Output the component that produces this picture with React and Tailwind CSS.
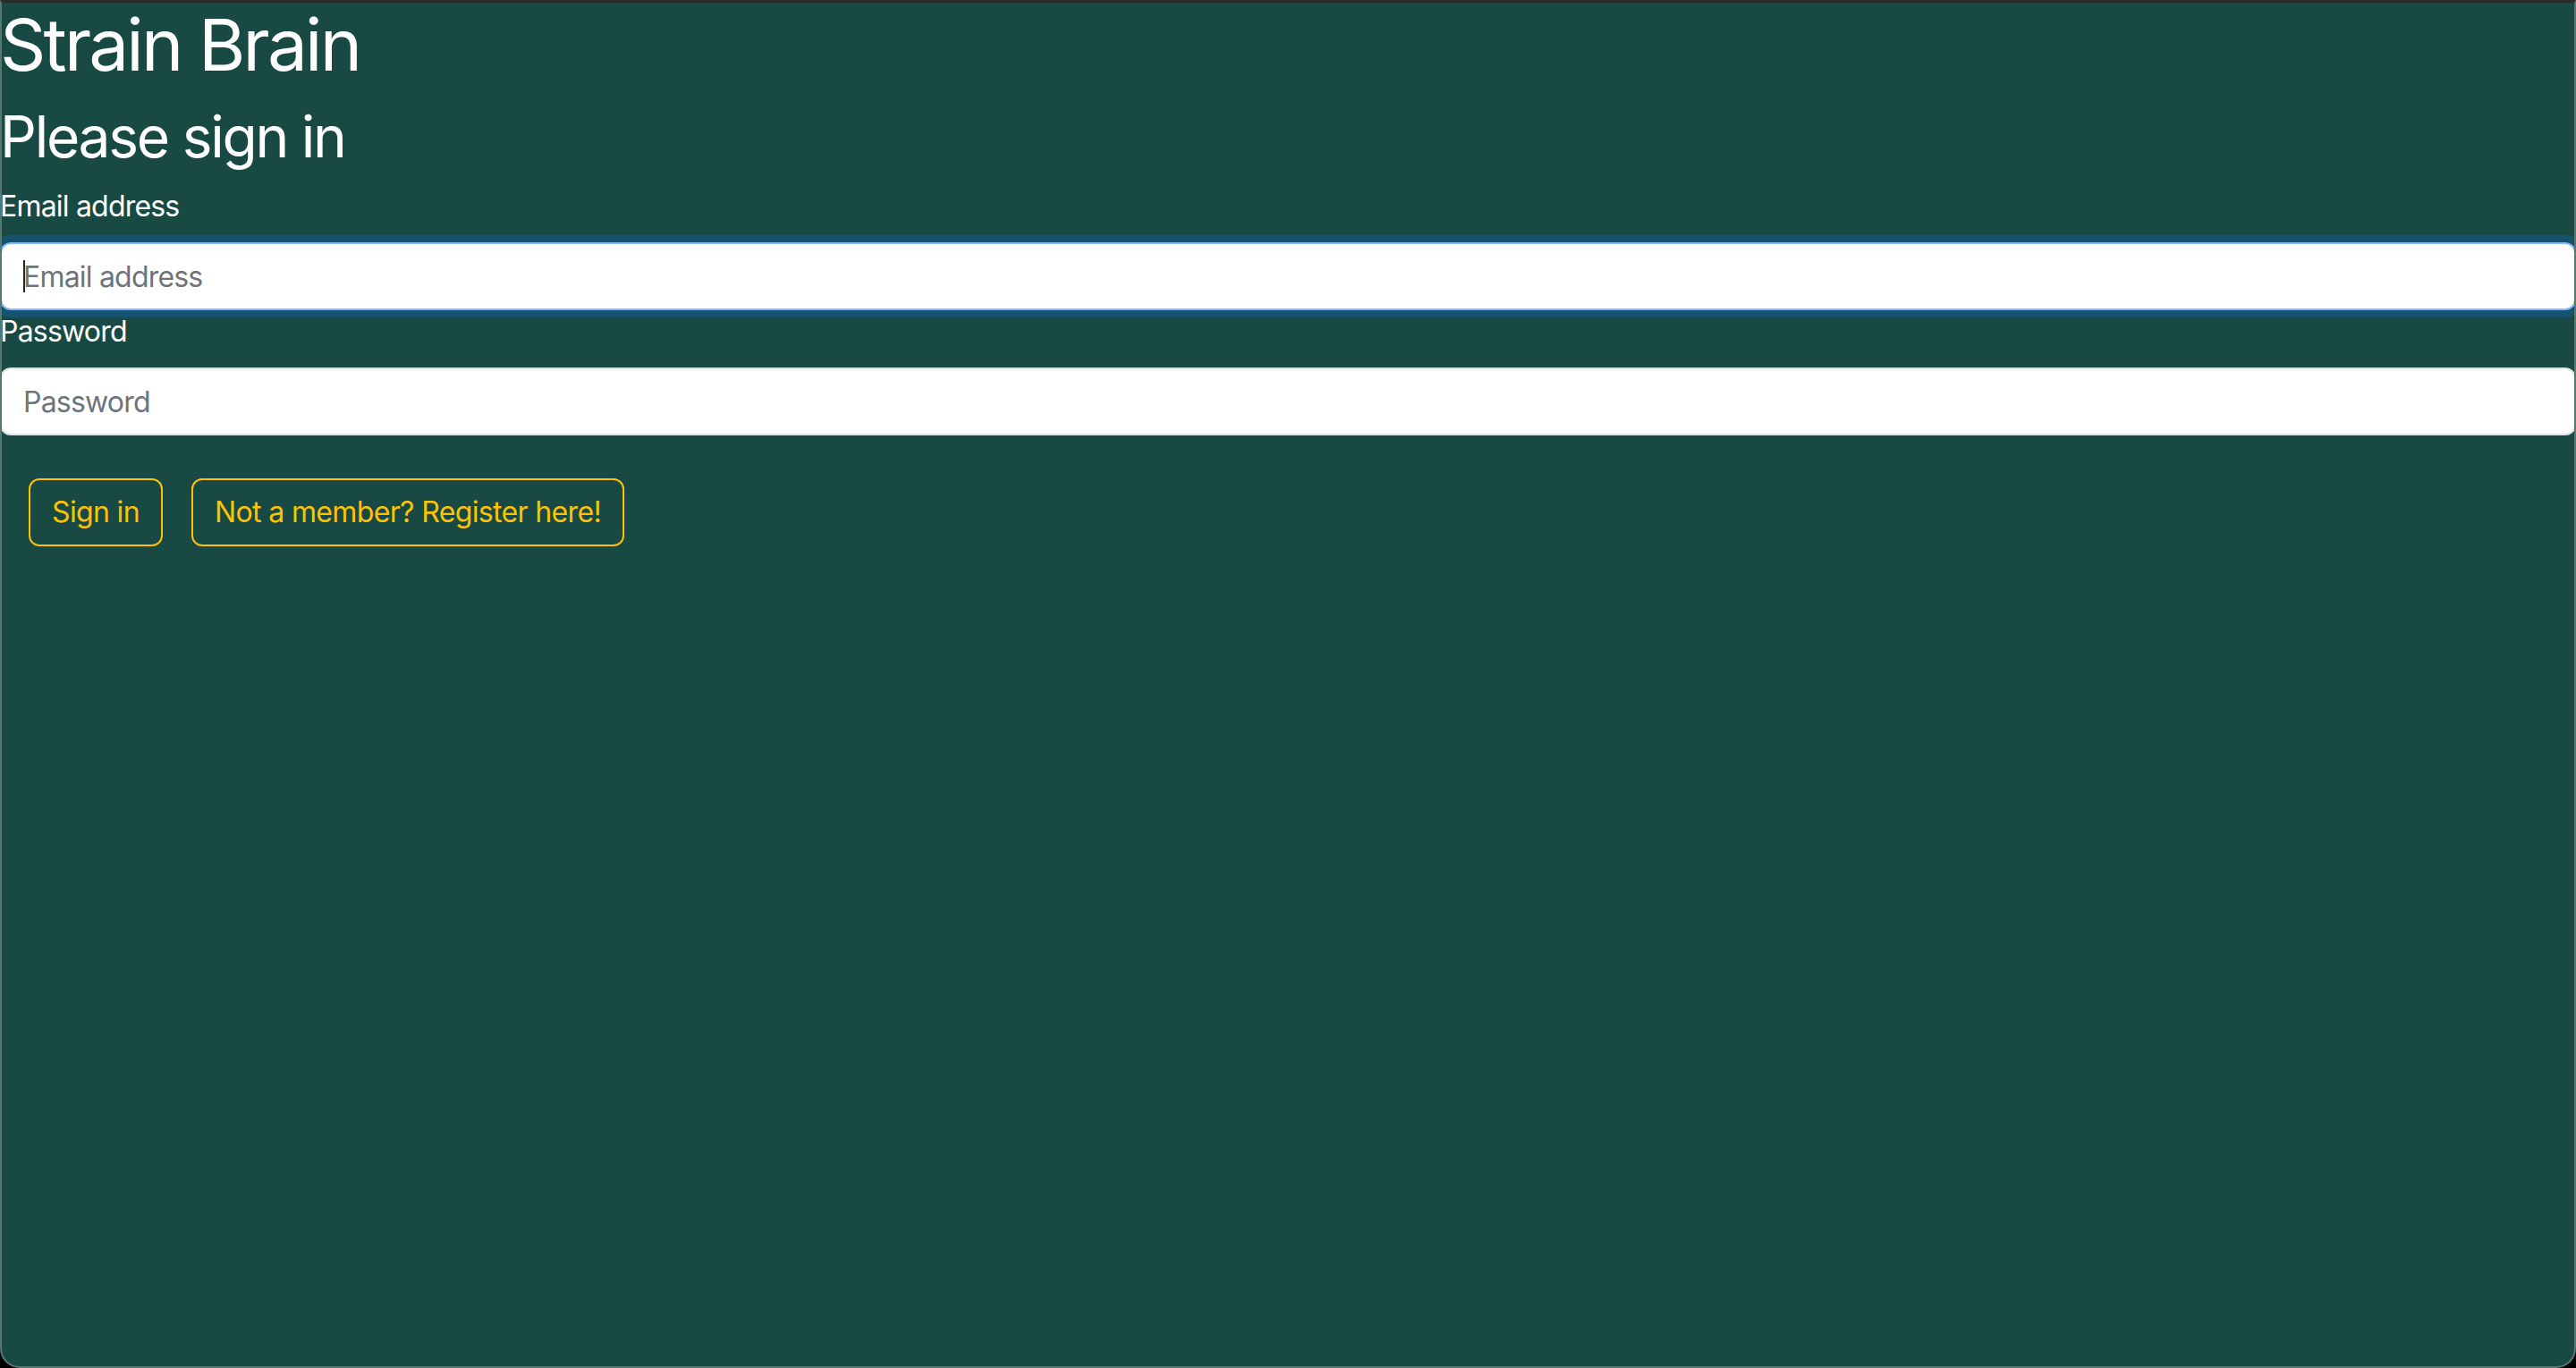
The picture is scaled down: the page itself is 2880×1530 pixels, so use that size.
import React from 'react';

const FONT = { fontFamily: 'Inter, "Noto Sans", "Liberation Sans", sans-serif' };

const Field = ({ label, type, placeholder, focused }) => (
  <div>
    <label className="block text-[32px] leading-[48px] tracking-[-0.025em] text-white mb-[16px]">{label}</label>
    <div className="relative">
      <input
        type={type}
        placeholder={placeholder}
        className={`block w-full h-[76px] rounded-[12px] bg-white px-[24px] text-[32px] tracking-[-0.025em] text-[#212529] placeholder:text-[#6c757d] outline-none border-2 ${
          focused ? 'border-[#86b7fe] shadow-[0_0_0_8px_rgba(13,110,253,0.25)]' : 'border-[#dee2e6]'
        }`}
        style={FONT}
      />
      {focused && <span className="absolute left-[26px] top-[20px] h-[36px] w-[2px] bg-[#212529]" />}
    </div>
  </div>
);

const App = () => {
  return (
    <div className="h-screen w-full bg-black" style={FONT}>
      <div className="h-full w-full bg-[#184a43] border-t-[3px] border-t-[#2b2a2a] border-x-2 border-b-2 border-x-[#56786d] border-b-[#56786d] rounded-b-[22px] overflow-hidden">
        <h1 className="text-[80px] leading-[96px] tracking-[-0.035em] text-white mb-[16px] -ml-[2px] -mt-[1px]">Strain Brain</h1>
        <h2 className="text-[64px] leading-[77px] tracking-[-0.035em] text-white mb-[16px] -ml-[2px]">Please sign in</h2>
        <form className="-ml-[2px] -mr-[2px]">
          <Field label="Email address" type="email" placeholder="Email address" focused />
          <Field label="Password" type="password" placeholder="Password" />
          <div className="flex gap-[32px] px-[32px] pt-[48px]">
            <button
              type="button"
              className="h-[76px] px-[24px] rounded-[12px] border-2 border-[#ffc107] text-[32px] tracking-[-0.02em] text-[#ffc107]"
            >
              Sign in
            </button>
            <button
              type="button"
              className="h-[76px] px-[24px] rounded-[12px] border-2 border-[#ffc107] text-[32px] tracking-[-0.02em] text-[#ffc107]"
            >
              Not a member? Register here!
            </button>
          </div>
        </form>
      </div>
    </div>
  );
};

export default App;
